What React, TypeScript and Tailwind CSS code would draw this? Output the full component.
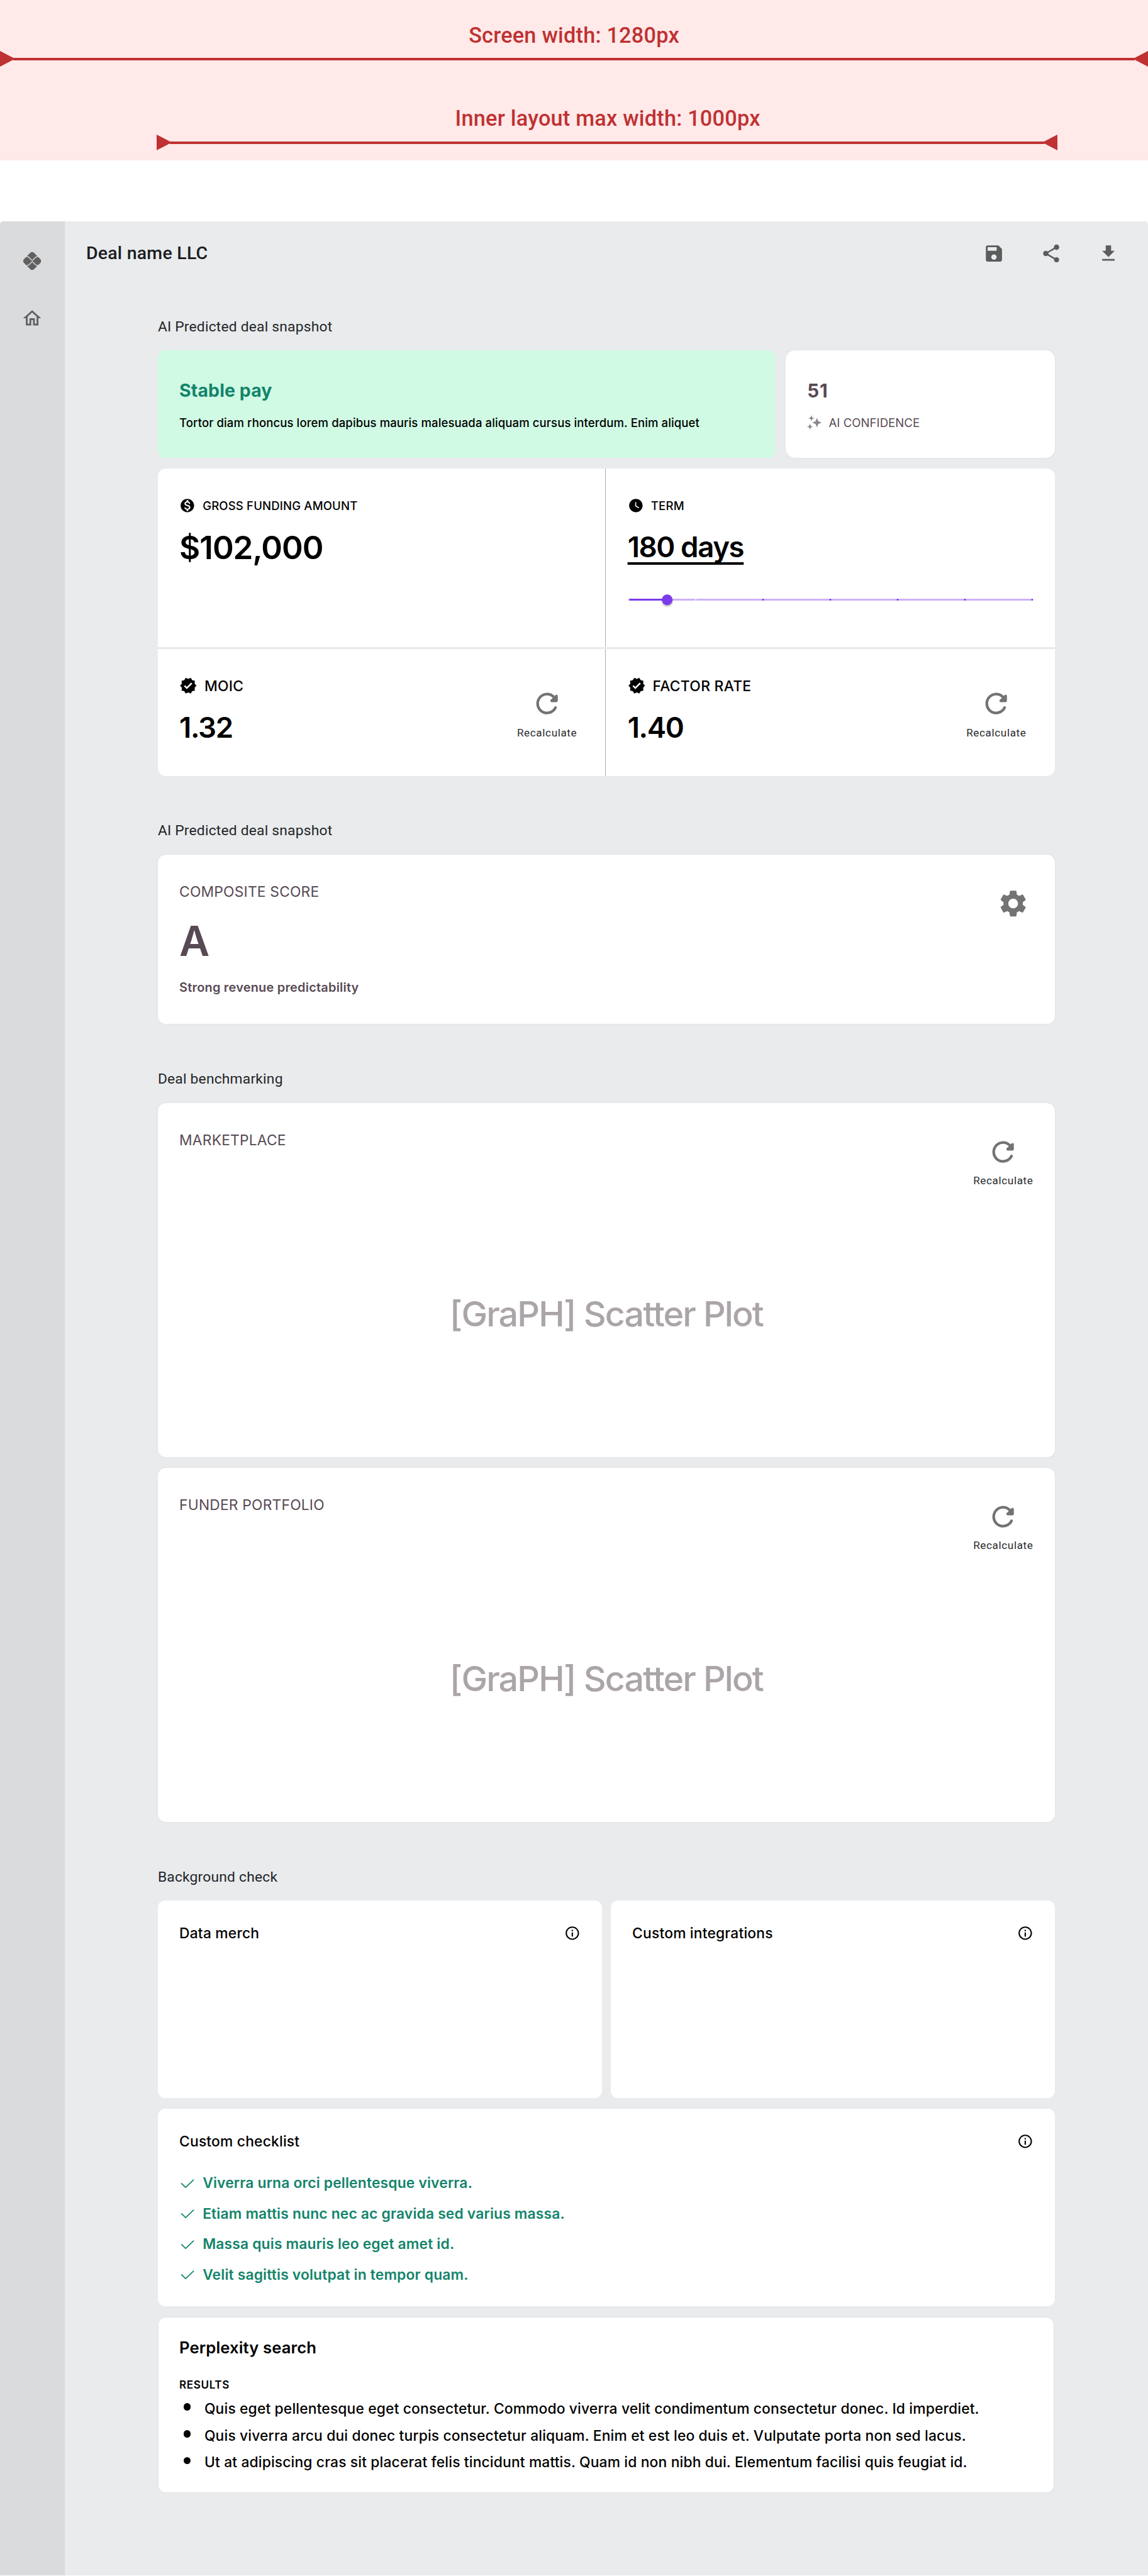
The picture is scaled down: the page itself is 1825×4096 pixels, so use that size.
import React from "react";
import {
  MdPix,
  MdOutlineHome,
  MdSave,
  MdShare,
  MdDownload,
  MdMonetizationOn,
  MdWatchLater,
  MdVerified,
  MdSettings,
  MdInfoOutline,
} from "react-icons/md";

const inter = "font-['Inter',sans-serif]";
const roboto = "font-['Roboto',sans-serif]";

function Dimension() {
  return (
    <div className="flex h-[25px] items-center text-[#bf3132]">
      <svg className="h-[25px] w-[24px] shrink-0" viewBox="0 0 24 25" fill="currentColor">
        <path d="M0 0L24 12.5L0 25Z" />
      </svg>
      <div className="-mx-[3px] h-[4px] flex-1 bg-[#bf3132]" />
      <svg className="h-[25px] w-[24px] shrink-0" viewBox="0 0 24 25" fill="currentColor">
        <path d="M24 0L0 12.5L24 25Z" />
      </svg>
    </div>
  );
}

function Banner() {
  return (
    <div
      className={`${roboto} h-[255.3px] bg-[#ffe9e9] pt-[35.6px] text-center text-[34.22px] leading-[40px] font-medium tracking-[0.24px] text-[#bf3132]`}
    >
      <div>Screen width: 1280px</div>
      <div className="mt-[5.9px]">
        <Dimension />
      </div>
      <div className="mt-[61.5px] mr-[143.9px] ml-[249.1px]">
        <div className="pl-[2px]">Inner layout max width: 1000px</div>
        <div className="mt-[6.5px]">
          <Dimension />
        </div>
      </div>
    </div>
  );
}

function SectionTitle({ children }: { children: React.ReactNode }) {
  return (
    <h2 className={`${roboto} mb-[20.6px] text-[22.8px] leading-[34px] tracking-[0.21px] text-[#242528]`}>
      {children}
    </h2>
  );
}

function Recalculate() {
  return (
    <button className="flex flex-col items-center">
      <svg className="size-[51.3px] text-[#737373]" viewBox="0 0 24 24" fill="currentColor">
        <path d="M17.65 6.35c-1.63-1.63-3.94-2.57-6.48-2.31-3.67.37-6.69 3.35-7.1 7.02C3.52 15.91 7.27 20 12 20c3.19 0 5.93-1.87 7.21-4.56.32-.67-.16-1.44-.9-1.44-.37 0-.72.2-.88.53-1.13 2.43-3.84 3.97-6.8 3.31-2.22-.49-4.01-2.3-4.48-4.52C5.31 9.44 8.26 6 12 6c1.66 0 3.14.69 4.22 1.78l-1.51 1.51c-.63.63-.19 1.71.7 1.71H19c.55 0 1-.45 1-1V6.41c0-.89-1.08-1.34-1.71-.71l-.64.65z" />
      </svg>
      <span
        className={`${roboto} mt-[8.2px] text-[17.1px] leading-[24px] tracking-[0.62px] text-[#2a2b2e]`}
      >
        Recalculate
      </span>
    </button>
  );
}

function Sparkles() {
  return (
    <svg className="size-[25.7px] text-[#8a8a8a]" viewBox="0 0 27 27" fill="currentColor">
      <path d="M16.5 5.9L18.8 11.4L24.3 13.7L18.8 16L16.5 21.5L14.2 16L8.7 13.7L14.2 11.4Z" />
      <path d="M7.2 1.3L8.6 4.9L12.2 6.3L8.6 7.7L7.2 11.3L5.8 7.7L2.2 6.3L5.8 4.9Z" />
      <path d="M4.9 15.5L6.3 19.1L9.9 20.5L6.3 21.9L4.9 25.5L3.5 21.9L-0.1 20.5L3.5 19.1Z" />
    </svg>
  );
}

const ticks = [0, 1, 2, 3, 4, 5, 6];

function TermSlider() {
  return (
    <div className="mt-[43.3px] ml-[1.4px] flex h-[20px] w-[642px] items-center">
      <div className="relative h-[3px] w-full bg-[#cdb1f8]">
        <div className="h-full w-[9.6%] bg-[#7c3aed]" />
        {ticks.map((t) => (
          <div
            key={t}
            className={`absolute top-0 h-[3px] w-[3px] -translate-x-1/2 rounded-full ${t < 2 ? "bg-[#e9defc]" : "bg-[#7c3aed]"}`}
            style={{ left: `${(t / 6) * 100}%` }}
          />
        ))}
        <div className="absolute top-1/2 left-[9.6%] size-[17.6px] -translate-x-1/2 -translate-y-1/2 rounded-full bg-[#7c3aed] shadow-[0_2px_3px_rgba(0,0,0,0.3)]" />
      </div>
    </div>
  );
}

function Rate({ label, value }: { label: string; value: string }) {
  return (
    <div className="flex flex-1 justify-between pr-[45.2px] pl-[34.2px]">
      <div className="pt-[42.2px]">
        <div className="flex items-center gap-[11.4px] text-[22.8px] leading-[32px] font-medium tracking-[0.3px]">
          <MdVerified className="size-[28.5px]" />
          {label}
        </div>
        <div className="mt-[20.6px] text-[45.6px] leading-[60px] font-semibold tracking-[-1.35px]">
          {value}
        </div>
      </div>
      <div className="pt-[60.6px]">
        <Recalculate />
      </div>
    </div>
  );
}

function Snapshot() {
  return (
    <section>
      <SectionTitle>AI Predicted deal snapshot</SectionTitle>
      <div className="flex h-[171.1px] gap-[17.1px]">
        <div className="w-[981px] rounded-[11.4px] bg-[#d0fae4] pt-[45.4px] pl-[34.2px]">
          <div className="text-[28.5px] leading-[36px] font-bold tracking-[0.08px] text-[#13846b]">
            Stable pay
          </div>
          <div className="mt-[19.2px] text-[18.53px] leading-[28px] font-medium tracking-[0.11px]">
            Tortor diam rhoncus lorem dapibus mauris malesuada aliquam cursus interdum. Enim aliquet
          </div>
        </div>
        <div className="flex-1 rounded-[15px] bg-white pt-[45.4px] pl-[34.2px] text-[#574a54] shadow-[0_0_5px_rgba(0,0,0,0.04)]">
          <div className="text-[29.5px] leading-[36px] font-bold tracking-[1px]">51</div>
          <div className="mt-[19.2px] flex items-center gap-[8.6px] text-[18.53px] leading-[28px] tracking-[0.09px]">
            <Sparkles />
            AI CONFIDENCE
          </div>
        </div>
      </div>
      <div className="mt-[17.1px] h-[488.1px] overflow-hidden rounded-[13px] bg-white">
        <div className="flex h-[284px]">
          <div className="w-[712.6px] border-r border-[#adadad] pt-[44.8px] pl-[34.2px]">
            <div className="flex items-center gap-[11.4px] text-[18.53px] leading-[28px] font-medium tracking-[0.18px]">
              <MdMonetizationOn className="size-[25.7px]" />
              GROSS FUNDING AMOUNT
            </div>
            <div className="mt-[22.2px] text-[51.2px] leading-[60px] font-semibold tracking-[-1.05px]">
              $102,000
            </div>
          </div>
          <div className="flex-1 pt-[44.8px] pl-[34.2px]">
            <div className="flex items-center gap-[11.4px] text-[18.53px] leading-[28px] font-medium tracking-[0.22px]">
              <MdWatchLater className="size-[25.7px]" />
              TERM
            </div>
            <div className="mt-[22.2px] text-[45.6px] leading-[60px] font-semibold tracking-[-1.4px]">
              <span className="underline decoration-[3.8px] underline-offset-[7.8px] [text-decoration-skip-ink:none]">
                180 days
              </span>
            </div>
            <TermSlider />
          </div>
        </div>
        <div className="h-[3px] bg-[#e9eaeb]" />
        <div className="flex h-[201.1px]">
          <div className="flex w-[712.6px] border-r border-[#adadad]">
            <Rate label="MOIC" value="1.32" />
          </div>
          <Rate label="FACTOR RATE" value="1.40" />
        </div>
      </div>
    </section>
  );
}

function Composite() {
  return (
    <section className="mt-[70.7px]">
      <SectionTitle>AI Predicted deal snapshot</SectionTitle>
      <div className="flex h-[269.5px] justify-between rounded-[13px] bg-white pr-[40px] pl-[34.2px] text-[#574a54] shadow-[0_0_5px_rgba(0,0,0,0.04)]">
        <div className="pt-[42.8px]">
          <div className="text-[22.8px] leading-[32px] tracking-[0.2px]">COMPOSITE SCORE</div>
          <div className="mt-[22.3px] text-[66.3px] leading-[80px] font-semibold">A</div>
          <div className="mt-[18.8px] text-[19.96px] leading-[30px] font-semibold tracking-[0.21px]">
            Strong revenue predictability
          </div>
        </div>
        <MdSettings className="mt-[51.9px] size-[51.3px] text-[#737373]" />
      </div>
    </section>
  );
}

function PlotCard({ label }: { label: string }) {
  return (
    <div className="h-[563.2px] rounded-[13px] bg-white shadow-[0_0_5px_rgba(0,0,0,0.04)]">
      <div className="flex h-[295px] justify-between pr-[34.2px] pl-[34.2px]">
        <div className="pt-[43.3px] text-[22.8px] leading-[32px] tracking-[0.2px] text-[#574a54]">
          {label}
        </div>
        <div className="pt-[52px]">
          <Recalculate />
        </div>
      </div>
      <div className="text-center text-[55.6px] leading-[80px] font-medium tracking-[-1.83px] text-[#aba5a9]">
        [GraPH] Scatter Plot
      </div>
    </div>
  );
}

function Benchmarking() {
  return (
    <section className="mt-[70.7px]">
      <SectionTitle>Deal benchmarking</SectionTitle>
      <div className="flex flex-col gap-[17.1px]">
        <PlotCard label="MARKETPLACE" />
        <PlotCard label="FUNDER PORTFOLIO" />
      </div>
    </section>
  );
}

function InfoHeading({ children }: { children: React.ReactNode }) {
  return (
    <div className="flex items-center justify-between text-[22.8px] leading-[32px] font-medium tracking-[0.2px]">
      {children}
      <MdInfoOutline className="size-[25.7px]" />
    </div>
  );
}

const checks = [
  "Viverra urna orci pellentesque viverra.",
  "Etiam mattis nunc nec ac gravida sed varius massa.",
  "Massa quis mauris leo eget amet id.",
  "Velit sagittis volutpat in tempor quam.",
];

const results = [
  "Quis eget pellentesque eget consectetur. Commodo viverra velit condimentum consectetur donec. Id imperdiet.",
  "Quis viverra arcu dui donec turpis consectetur aliquam. Enim et est leo duis et. Vulputate porta non sed lacus.",
  "Ut at adipiscing cras sit placerat felis tincidunt mattis. Quam id non nibh dui. Elementum facilisi quis feugiat id.",
];

function Background() {
  return (
    <section className="mt-[70.7px]">
      <SectionTitle>Background check</SectionTitle>
      <div className="grid h-[313.7px] grid-cols-2 gap-[14.3px]">
        <div className="rounded-[11.4px] bg-white px-[34.2px] pt-[35.6px]">
          <InfoHeading>Data merch</InfoHeading>
        </div>
        <div className="rounded-[11.4px] bg-white px-[34.2px] pt-[35.6px]">
          <InfoHeading>Custom integrations</InfoHeading>
        </div>
      </div>
      <div className="mt-[17.1px] h-[313.7px] rounded-[11.4px] bg-white px-[34.2px] pt-[35.6px]">
        <InfoHeading>Custom checklist</InfoHeading>
        <ul className="mt-[26.5px] text-[22.8px] leading-[48.5px] font-semibold tracking-[0.18px] text-[#13846b]">
          {checks.map((c) => (
            <li key={c} className="flex items-center gap-[11.4px]">
              <svg
                className="size-[25.7px]"
                viewBox="0 0 27 27"
                fill="none"
                stroke="currentColor"
                strokeWidth="1.8"
                strokeLinecap="round"
                strokeLinejoin="round"
              >
                <path d="M3.8 13.6L10.6 20.2L23.8 7.4" />
              </svg>
              {c}
            </li>
          ))}
        </ul>
      </div>
      <div className="mx-[1.4px] mt-[18.3px] h-[278.2px] rounded-[11.4px] bg-white pt-[30.1px] pl-[32.8px] shadow-[0_0_2px_rgba(0,0,0,0.12)]">
        <div className="text-[25.66px] leading-[36px] font-semibold tracking-[0.1px]">
          Perplexity search
        </div>
        <div className="mt-[28.8px] text-[17.1px] leading-[24px] font-semibold tracking-[0.6px]">
          RESULTS
        </div>
        <ul className="mt-[4.7px] text-[22.8px] leading-[42.8px] font-medium tracking-[0.16px]">
          {results.map((r) => (
            <li key={r} className="flex items-center gap-[21.6px] pl-[6.9px]">
              <span className="mb-[6.2px] size-[11.4px] rounded-full bg-black" />
              {r}
            </li>
          ))}
        </ul>
      </div>
    </section>
  );
}

export default function App() {
  return (
    <div className={`${inter} h-[4096px] w-[1825px] overflow-hidden bg-white text-black`}>
      <Banner />
      <div className="mt-[96.7px] flex h-[3743px] overflow-hidden rounded-t-[5px] bg-[#e9ebed]">
        <aside className="flex w-[102.7px] shrink-0 flex-col items-center gap-[56.5px] bg-[#dadbdd] pt-[45.9px] text-[#606060]">
          <MdPix className="size-[34.2px]" />
          <MdOutlineHome className="size-[34.2px]" />
        </aside>
        <main className="flex-1">
          <header className="flex h-[103px] items-center justify-between pr-[45.9px] pl-[34.2px]">
            <h1 className={`${roboto} text-[28.5px] font-medium tracking-[0.24px] text-[#1b1c1f]`}>
              Deal name LLC
            </h1>
            <div className="flex gap-[57px] text-[#5c5c5c]">
              <MdSave className="size-[34.2px]" />
              <MdShare className="size-[34.2px]" />
              <MdDownload className="size-[34.2px]" />
            </div>
          </header>
          <div className="mt-[47.7px] ml-[148.2px] w-[1425.8px]">
            <Snapshot />
            <Composite />
            <Benchmarking />
            <Background />
          </div>
        </main>
      </div>
    </div>
  );
}
